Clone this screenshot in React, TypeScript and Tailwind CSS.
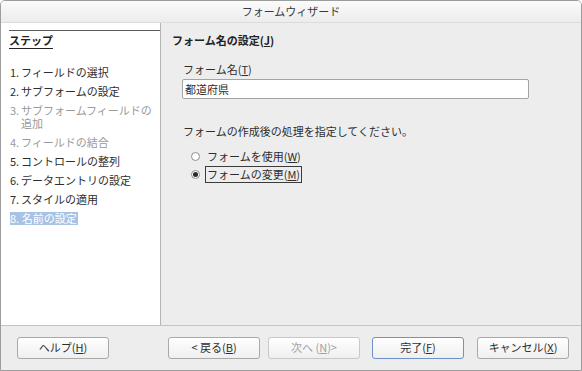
import React from 'react'

const FONT = { fontFamily: '"Noto Sans CJK JP", "Noto Sans", sans-serif' }

// ステップ一覧
const steps = [
  { num: '1.', label: 'フィールドの選択', enabled: true },
  { num: '2.', label: 'サブフォームの設定', enabled: true },
  { num: '3.', label: 'サブフォームフィールドの\n追加', enabled: false },
  { num: '4.', label: 'フィールドの結合', enabled: false },
  { num: '5.', label: 'コントロールの整列', enabled: true },
  { num: '6.', label: 'データエントリの設定', enabled: true },
  { num: '7.', label: 'スタイルの適用', enabled: true },
  { num: '8.', label: '名前の設定', enabled: true, active: true },
]

function Btn({ children, focused, disabled }: { children: React.ReactNode; focused?: boolean; disabled?: boolean }) {
  return (
    <button
      className={`w-[92px] h-[22px] rounded-[3px] border text-[11px] leading-none bg-gradient-to-b from-white to-[#efefef] ${
        focused ? 'border-[#6f92c8]' : disabled ? 'border-[#c8c8c8]' : 'border-[#a9a9a9]'
      } ${disabled ? 'text-[#a2a2a2]' : 'text-[#2e2e2e]'}`}
    >
      {children}
    </button>
  )
}

function Radio({ checked, children, focused }: { checked?: boolean; children: React.ReactNode; focused?: boolean }) {
  return (
    <div className="flex items-center h-[18px]">
      <span className="w-[9px] h-[9px] rounded-full border border-[#8c8c8c] bg-white flex items-center justify-center">
        {checked && <span className="w-[5px] h-[5px] rounded-full bg-[#2a2a2a]" />}
      </span>
      <span className={`ml-[5px] px-[1px] leading-[15px] border ${focused ? 'border-[#3c3c3c]' : 'border-transparent'}`}>
        {children}
      </span>
    </div>
  )
}

export default function App() {
  return (
    <div style={FONT} className="w-[582px] h-[371px] flex flex-col bg-[#ededed] border border-[#9d9d9d] rounded-t-[5px] overflow-hidden text-[11px] text-[#2e2e2e]">
      {/* タイトルバー */}
      <div className="h-[22px] shrink-0 flex items-center justify-center bg-gradient-to-b from-[#fbfbfb] to-[#ececec] border-b border-[#dcdcdc] text-[#3a3a3a]">
        フォームウィザード
      </div>

      <div className="flex flex-1 min-h-0">
        {/* 左: ステップ */}
        <div className="w-[160px] shrink-0 bg-white border-r border-[#b4b4b4] pt-[7px]">
          <div className="ml-[8px] border-t border-[#5a5a5a] pt-[1px]">
            <span className="font-bold underline underline-offset-[3px] text-[#222]">ステップ</span>
          </div>
          <div className="mt-[17px] flex flex-col gap-[6px]">
            {steps.map((s, i) => (
              <div
                key={i}
                className={`ml-[9px] leading-[13px] flex ${s.enabled ? 'text-[#2e2e2e]' : 'text-[#9a9a9a]'}`}
              >
                {s.active ? (
                  <span className="bg-[#a7c2e4] text-white pr-[1px]">
                    {s.num} {s.label}
                  </span>
                ) : (
                  <>
                    <span className="w-[11px] shrink-0">{s.num}</span>
                    <span className="whitespace-pre">{s.label}</span>
                  </>
                )}
              </div>
            ))}
          </div>
        </div>

        {/* 右: 設定 */}
        <div className="flex-1 pl-[11px] pt-[9px]">
          <div className="font-bold text-[#222]">
            フォーム名の設定(<span className="underline">J</span>)
          </div>
          <div className="ml-[11px] mt-[12px]">
            フォーム名(<span className="underline">T</span>)
          </div>
          <div className="ml-[10px] mt-[2px] w-[347px] h-[20px] bg-white border border-[#a4a4a4] rounded-[2px] flex items-center px-[2px]">
            都道府県
          </div>
          <div className="ml-[11px] mt-[24px]">フォームの作成後の処理を指定してください。</div>
          <div className="ml-[19px] mt-[8px] flex flex-col">
            <Radio>
              フォームを使用(<span className="underline">W</span>)
            </Radio>
            <Radio checked focused>
              フォームの変更(<span className="underline">M</span>)
            </Radio>
          </div>
        </div>
      </div>

      {/* ボタン */}
      <div className="h-[45px] shrink-0 border-t border-[#c4c4c4] flex items-center pl-[16px] pb-[1px]">
        <Btn>
          ヘルプ(<span className="underline">H</span>)
        </Btn>
        <div className="ml-[59px] flex gap-[8px]">
          <Btn>
            &lt; 戻る(<span className="underline">B</span>)
          </Btn>
          <Btn disabled>
            次へ (<span className="underline">N</span>)&gt;
          </Btn>
        </div>
        <div className="ml-[12px] flex gap-[13px]">
          <Btn focused>
            完了(<span className="underline">F</span>)
          </Btn>
          <Btn>
            キャンセル(<span className="underline">X</span>)
          </Btn>
        </div>
      </div>
    </div>
  )
}
